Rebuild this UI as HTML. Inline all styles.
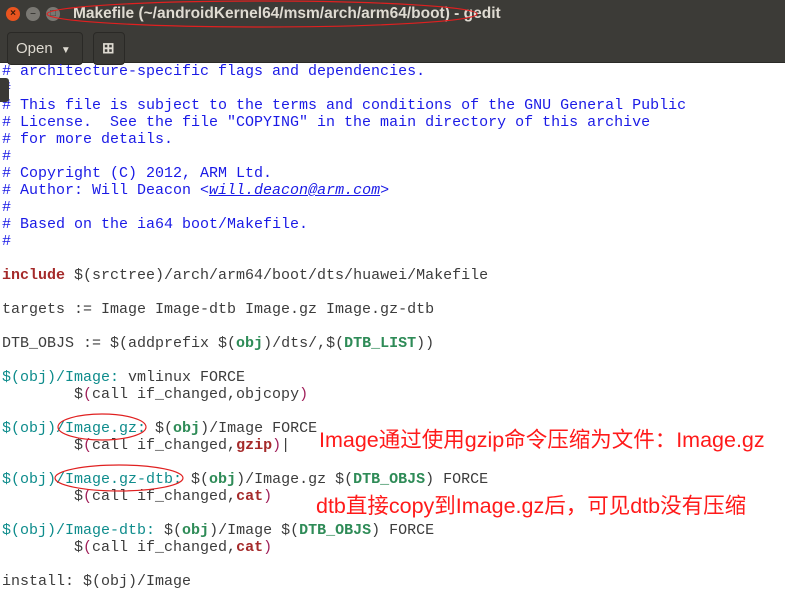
<!DOCTYPE html>
<html><head><meta charset="utf-8"><style>
*{margin:0;padding:0;box-sizing:border-box}
body{width:785px;height:576px;overflow:hidden;background:#fff;position:relative;font-family:"Liberation Sans",sans-serif}
#title{position:absolute;left:0;top:0;width:785px;height:30px;background:#3c3b37}
#tool{position:absolute;left:0;top:30px;width:785px;height:33px;background:#3c3b37;border-bottom:1px solid #2b2a27}
.b{position:absolute;top:7px;width:14px;height:14px;border-radius:50%;background:#7a7873;color:#3c3b37;font-size:10px;line-height:14px;text-align:center;font-weight:bold}
#tt{position:absolute;left:73px;top:5px;color:#dfdbd2;font-size:15.5px;font-weight:bold}
.btn{position:absolute;top:32px;height:33px;border:1px solid #2a2926;border-radius:4px;background:#3a3935;color:#dfdbd2;font-size:15px}
#code{position:absolute;left:2px;top:63px;font-family:"Liberation Mono",monospace;font-size:15px;line-height:17px;white-space:pre;color:#3c3c3c}
.c{color:#1a1ae6}.t{color:#0e8c8c}.k{color:#a52a2a;font-weight:bold}.g{color:#2e8b57;font-weight:bold}.m{color:#a0205a}
.ann{position:absolute;color:#ff1a1a;font-size:21.5px;font-family:"Liberation Sans","Noto Sans CJK SC",sans-serif;white-space:nowrap}
</style></head><body>
<div id="title">
<div class="b" style="left:6px;background:#e9541f;color:#3a1a0a">×</div>
<div class="b" style="left:26px">–</div>
<div class="b" style="left:46px">□</div>
<div id="tt">Makefile (~/androidKernel64/msm/arch/arm64/boot) - gedit</div>
</div>
<div id="tool"></div>
<div class="btn" style="left:7px;width:76px;padding:7px 0 0 8px">Open <span style="font-size:10px;margin-left:4px">▼</span></div>
<div class="btn" style="left:93px;width:32px;padding:6px 0 0 8px;font-weight:bold">⊞</div>
<div id="code"><span class="c"># architecture-specific flags and dependencies.
#
# This file is subject to the terms and conditions of the GNU General Public
# License.  See the file "COPYING" in the main directory of this archive
# for more details.
#
# Copyright (C) 2012, ARM Ltd.
# Author: Will Deacon &lt;<i><u>will.deacon@arm.com</u></i>&gt;
#
# Based on the ia64 boot/Makefile.
#</span>

<span class="k">include</span> $(srctree)/arch/arm64/boot/dts/huawei/Makefile

targets := Image Image-dtb Image.gz Image.gz-dtb

DTB_OBJS := $(addprefix $(<span class="g">obj</span>)/dts/,$(<span class="g">DTB_LIST</span>))

<span class="t">$(obj)/Image:</span> vmlinux FORCE
        $<span class="m">(</span>call if_changed,objcopy<span class="m">)</span>

<span class="t">$(obj)/Image.gz:</span> $(<span class="g">obj</span>)/Image FORCE
        $<span class="m">(</span>call if_changed,<span class="k">gzip</span><span class="m">)</span>|

<span class="t">$(obj)/Image.gz-dtb:</span> $(<span class="g">obj</span>)/Image.gz $(<span class="g">DTB_OBJS</span>) FORCE
        $<span class="m">(</span>call if_changed,<span class="k">cat</span><span class="m">)</span>

<span class="t">$(obj)/Image-dtb:</span> $(<span class="g">obj</span>)/Image $(<span class="g">DTB_OBJS</span>) FORCE
        $<span class="m">(</span>call if_changed,<span class="k">cat</span><span class="m">)</span>

install: $(obj)/Image</div>
<div style="position:absolute;left:0;top:78px;width:9px;height:24px;background:#3a3935;border-radius:0 3px 3px 0"></div>
<svg style="position:absolute;left:0;top:0" width="785" height="576">
<ellipse cx="262" cy="14" rx="215" ry="13" fill="none" stroke="#e02020" stroke-width="1.2"/>
<ellipse cx="102" cy="427" rx="44" ry="13" fill="none" stroke="#e02020" stroke-width="1.2"/>
<ellipse cx="119" cy="478" rx="64" ry="13" fill="none" stroke="#e02020" stroke-width="1.2"/>
</svg>
<div class="ann" style="left:319px;top:423px">Image通过使用gzip命令压缩为文件：Image.gz</div>
<div class="ann" style="left:316px;top:489px">dtb直接copy到Image.gz后，可见dtb没有压缩</div>
</body></html>
